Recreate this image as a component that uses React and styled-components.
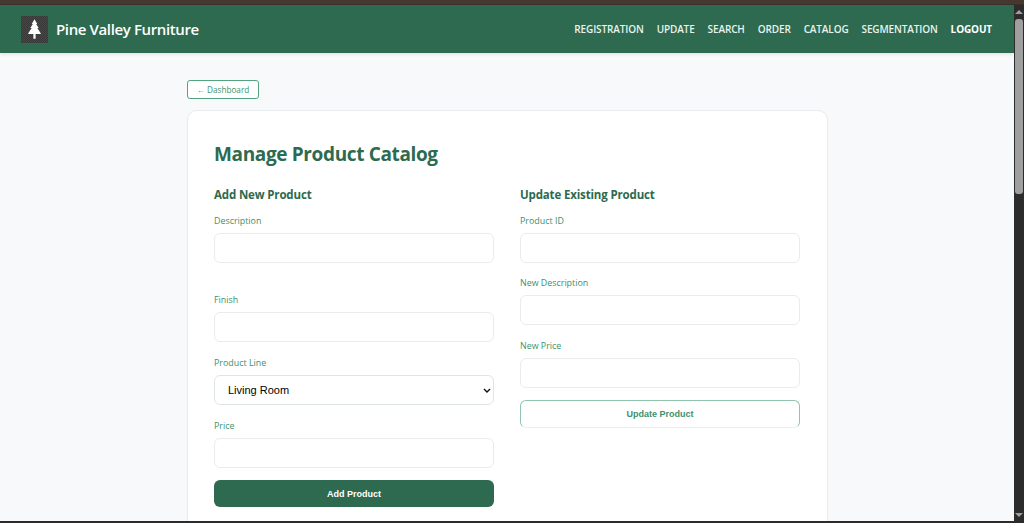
import React from "react";
import styled, { createGlobalStyle } from "styled-components";

const GlobalStyle = createGlobalStyle`
  html, body {
    margin: 0;
    height: 100%;
    overflow: hidden;
    background: #2b2b2b;
  }
  * { box-sizing: border-box; }
`;

const chevron =
  "data:image/svg+xml,%3Csvg xmlns='http://www.w3.org/2000/svg' width='8' height='5' viewBox='0 0 8 5'%3E%3Cpath d='M1 1l3 3 3-3' fill='none' stroke='%23111' stroke-width='1.4'/%3E%3C/svg%3E";

const Frame = styled.div`
  width: 1024px;
  height: 523px;
  display: flex;
  flex-direction: column;
  overflow: hidden;
  font-family: "Open Sans", "Noto Sans", sans-serif;
`;

const TopStrip = styled.div`
  height: 5px;
  flex: none;
  background: #463830;
  border-bottom: 1px solid #3d302a;
`;

const Viewport = styled.div`
  flex: 1;
  min-height: 0;
  display: flex;
`;

const Page = styled.div`
  flex: 1;
  min-width: 0;
  overflow: hidden;
  background: #f8f9fa;
`;

const Scrollbar = styled.div`
  width: 10px;
  flex: none;
  background: #2c2c2c;
  display: flex;
  flex-direction: column;
  align-items: center;
  justify-content: space-between;
  padding: 5px 0 4px;
`;

const ScrollTrack = styled.div`
  flex: 1;
  width: 100%;
  padding: 5px 1px 0;
`;

const ScrollThumb = styled.div`
  height: 175px;
  background: #9f9f9f;
  border-radius: 3px;
`;

const BottomStrip = styled.div`
  height: 2px;
  flex: none;
  background: #2b2b2b;
`;

const Arrow = styled.div`
  width: 0;
  height: 0;
  border-left: 4px solid transparent;
  border-right: 4px solid transparent;
  ${(p) => (p.$down ? "border-top: 4px solid #9f9f9f;" : "border-bottom: 4px solid #9f9f9f;")}
`;

const Navbar = styled.nav`
  height: 48px;
  background: #2d6a4f;
  display: flex;
  align-items: center;
  justify-content: space-between;
  padding: 0 22px 0 21px;
  box-shadow: 0 1px 4px rgba(0, 0, 0, 0.12);
`;

const Brand = styled.div`
  display: flex;
  align-items: center;
  gap: 8px;
  color: #fff;
  font-size: 15px;
  font-weight: 600;
  letter-spacing: -0.38px;
`;

const Logo = styled.div`
  width: 27px;
  height: 27px;
  background: repeating-conic-gradient(#383838 0% 25%, #474747 0% 50%) 0 0 / 2px 2px;
  display: flex;
  align-items: center;
  justify-content: center;
`;

const NavLinks = styled.div`
  display: flex;
  gap: 13px;
  align-items: center;
`;

const NavLink = styled.a`
  color: ${(p) => (p.$strong ? "#ffffff" : "#e9f3ee")};
  font-size: 10px;
  font-weight: ${(p) => (p.$strong ? 700 : 600)};
  letter-spacing: -0.13px;
`;

const Container = styled.main`
  width: 641px;
  margin: 27px auto 0 187px;
`;

const BackButton = styled.button`
  display: block;
  width: 72px;
  height: 19px;
  padding: 0;
  background: #fff;
  border: 1px solid #52a37f;
  border-radius: 3px;
  color: #40916c;
  font-family: inherit;
  font-size: 8.2px;
`;

const Card = styled.section`
  margin-top: 11px;
  background: #fff;
  border: 1px solid #e9ecef;
  border-radius: 10px;
  padding: 27px 26px 40px 26px;
  box-shadow: 0 1px 3px rgba(0, 0, 0, 0.02);
`;

const Title = styled.h1`
  margin: 0 0 16px;
  height: 32px;
  line-height: 32px;
  color: #2d6a4f;
  font-size: 19px;
  font-weight: 700;
  letter-spacing: -0.36px;
`;

const Columns = styled.div`
  display: grid;
  grid-template-columns: 280px 280px;
  column-gap: 26px;
`;

const Column = styled.div`
  display: flex;
  flex-direction: column;
`;

const SectionTitle = styled.h2`
  margin: 0 0 10px;
  height: 17px;
  line-height: 17px;
  color: #2d6a4f;
  font-size: 11.5px;
  font-weight: 700;
  letter-spacing: -0.15px;
`;

const Field = styled.div`
  display: flex;
  flex-direction: column;
  margin-bottom: ${(p) => p.$gap || 13}px;
`;

const Label = styled.label`
  height: 16px;
  line-height: 15px;
  margin-bottom: 4px;
  color: #40916c;
  font-size: 8.9px;
  font-weight: 500;
`;

const Input = styled.input`
  width: 100%;
  height: 30px;
  background: #fff;
  border: 1px solid #e9ecef;
  border-radius: 6px;
  outline: none;
`;

const Select = styled.select`
  width: 100%;
  height: 30px;
  padding: 0 9px 0 13px;
  appearance: none;
  background: #fff url("${chevron}") no-repeat right 2px center;
  border: 1px solid #dfe5e3;
  border-radius: 6px;
  color: #000;
  font-family: "Liberation Sans", Arial, sans-serif;
  font-size: 11px;
  outline: none;
`;

const SubmitButton = styled.button`
  width: 100%;
  height: ${(p) => (p.$outline ? 28 : 27)}px;
  background: ${(p) => (p.$outline ? "#fff" : "#2d6a4f")};
  border: ${(p) => (p.$outline ? "1px solid #8fc4ad" : "none")};
  border-bottom-color: ${(p) => (p.$outline ? "#e6f1ec" : "transparent")};
  border-radius: 6px;
  color: ${(p) => (p.$outline ? "#40916c" : "#fff")};
  font-family: "Liberation Sans", Arial, sans-serif;
  font-size: 9px;
  font-weight: 700;
`;

function PineIcon() {
  return (
    <svg width="13" height="20" viewBox="0 0 14 21" fill="#fff">
      <path d="M7 0 L10 5 H8.8 L11.5 9.5 H10 L13 14 L14 16 H8.2 V21 H5.8 V16 H0 L1 14 L4 9.5 H2.5 L5.2 5 H4 Z" />
    </svg>
  );
}

const navItems = ["REGISTRATION", "UPDATE", "SEARCH", "ORDER", "CATALOG", "SEGMENTATION"];

export default function App() {
  return (
    <Frame>
      <GlobalStyle />
      <TopStrip />
      <Viewport>
        <Page>
          <Navbar>
            <Brand>
              <Logo>
                <PineIcon />
              </Logo>
              Pine Valley Furniture
            </Brand>
            <NavLinks>
              {navItems.map((item) => (
                <NavLink key={item}>{item}</NavLink>
              ))}
              <NavLink $strong>LOGOUT</NavLink>
            </NavLinks>
          </Navbar>
          <Container>
            <BackButton>← Dashboard</BackButton>
            <Card>
              <Title>Manage Product Catalog</Title>
              <Columns>
                <Column>
                  <SectionTitle>Add New Product</SectionTitle>
                  <Field $gap={29}>
                    <Label>Description</Label>
                    <Input />
                  </Field>
                  <Field>
                    <Label>Finish</Label>
                    <Input />
                  </Field>
                  <Field>
                    <Label>Product Line</Label>
                    <Select defaultValue="Living Room">
                      <option>Living Room</option>
                      <option>Bedroom</option>
                      <option>Dining Room</option>
                    </Select>
                  </Field>
                  <Field $gap={12}>
                    <Label>Price</Label>
                    <Input />
                  </Field>
                  <SubmitButton>Add Product</SubmitButton>
                </Column>
                <Column>
                  <SectionTitle>Update Existing Product</SectionTitle>
                  <Field $gap={12}>
                    <Label>Product ID</Label>
                    <Input />
                  </Field>
                  <Field>
                    <Label>New Description</Label>
                    <Input />
                  </Field>
                  <Field $gap={12}>
                    <Label>New Price</Label>
                    <Input />
                  </Field>
                  <SubmitButton $outline>Update Product</SubmitButton>
                </Column>
              </Columns>
            </Card>
          </Container>
        </Page>
        <Scrollbar>
          <Arrow />
          <ScrollTrack>
            <ScrollThumb />
          </ScrollTrack>
          <Arrow $down />
        </Scrollbar>
      </Viewport>
      <BottomStrip />
    </Frame>
  );
}
